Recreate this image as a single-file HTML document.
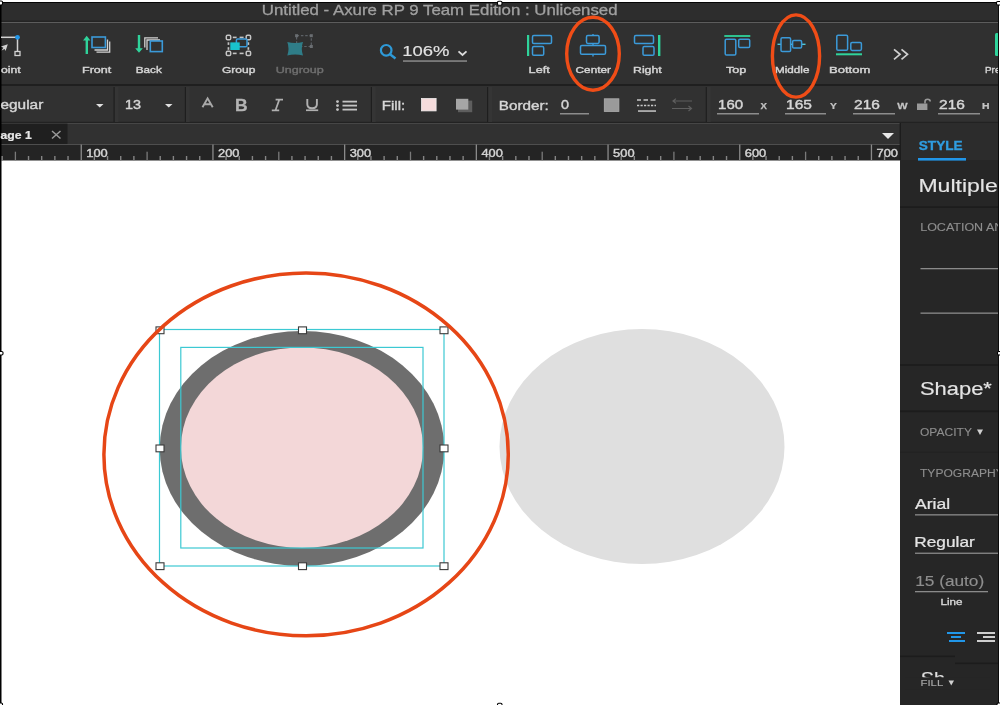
<!DOCTYPE html>
<html><head><meta charset="utf-8"><style>
html,body{margin:0;padding:0;width:1000px;height:705px;overflow:hidden;background:#fff}
svg{display:block;font-family:"Liberation Sans", sans-serif;will-change:transform}
</style></head><body>
<svg width="1000" height="705" viewBox="0 0 1000 705">
<rect x="0" y="0" width="1000" height="705" fill="#ffffff" />
<rect x="0" y="2" width="1000" height="1" fill="#050505" />
<rect x="0" y="3" width="999" height="18" fill="#2d2d2d" />
<rect x="0" y="20.7" width="999" height="1.9" fill="#242424" />
<rect x="0" y="22.6" width="999" height="62" fill="#303030" />
<rect x="0" y="84" width="999" height="2" fill="#1f1f1f" />
<rect x="0" y="86" width="999" height="37" fill="#313131" />
<rect x="0" y="121.8" width="999" height="2" fill="#222222" />
<rect x="0" y="123.8" width="900" height="21" fill="#313131" />
<rect x="0" y="123.6" width="67.5" height="20.3" fill="#1f1f1f" />
<rect x="0" y="144.8" width="900" height="15.7" fill="#242424" />
<rect x="900" y="123" width="99" height="582" fill="#262626" />
<rect x="900" y="123" width="99" height="37" fill="#2c2c2c" />
<rect x="899.6" y="123" width="1.4" height="37" fill="#1c1c1c" />
<rect x="114.5" y="87" width="4" height="35" fill="#353535" />
<rect x="113.5" y="87" width="1.2" height="35" fill="#1e1e1e" />
<rect x="185.8" y="87" width="4" height="35" fill="#353535" />
<rect x="184.8" y="87" width="1.2" height="35" fill="#1e1e1e" />
<rect x="371.8" y="87" width="4" height="35" fill="#353535" />
<rect x="370.8" y="87" width="1.2" height="35" fill="#1e1e1e" />
<rect x="488" y="87" width="4" height="35" fill="#353535" />
<rect x="487" y="87" width="1.2" height="35" fill="#1e1e1e" />
<rect x="706.7" y="87" width="4" height="35" fill="#353535" />
<rect x="705.7" y="87" width="1.2" height="35" fill="#1e1e1e" />
<rect x="0" y="2" width="1.5" height="703" fill="#000000" />
<rect x="998" y="2" width="1" height="703" fill="#111111" />
<text transform="translate(261.84,15.30) scale(1.1579,1)" font-size="14.54" fill="#a0a0a0" font-weight="400" font-style="normal" stroke="#a0a0a0" stroke-width="0.3">Untitled - Axure RP 9 Team Edition : Unlicensed</text>
<text transform="translate(1.00,72.80) scale(1.2378,1)" font-size="9.88" fill="#d6d6d6" font-weight="400" font-style="normal" stroke="#d6d6d6" stroke-width="0.39506172839506193">oint</text>
<text transform="translate(82.00,72.80) scale(1.2719,1)" font-size="9.88" fill="#d6d6d6" font-weight="400" font-style="normal" stroke="#d6d6d6" stroke-width="0.39506172839506193">Front</text>
<text transform="translate(135.80,72.80) scale(1.1869,1)" font-size="9.88" fill="#d6d6d6" font-weight="400" font-style="normal" stroke="#d6d6d6" stroke-width="0.39506172839506193">Back</text>
<text transform="translate(222.00,72.80) scale(1.2178,1)" font-size="9.88" fill="#d6d6d6" font-weight="400" font-style="normal" stroke="#d6d6d6" stroke-width="0.39506172839506193">Group</text>
<text transform="translate(528.60,72.80) scale(1.2810,1)" font-size="9.88" fill="#d6d6d6" font-weight="400" font-style="normal" stroke="#d6d6d6" stroke-width="0.39506172839506193">Left</text>
<text transform="translate(575.60,72.80) scale(1.1911,1)" font-size="9.88" fill="#d6d6d6" font-weight="400" font-style="normal" stroke="#d6d6d6" stroke-width="0.39506172839506193">Center</text>
<text transform="translate(633.00,72.80) scale(1.2459,1)" font-size="9.88" fill="#d6d6d6" font-weight="400" font-style="normal" stroke="#d6d6d6" stroke-width="0.39506172839506193">Right</text>
<text transform="translate(726.00,72.80) scale(1.2796,1)" font-size="9.88" fill="#d6d6d6" font-weight="400" font-style="normal" stroke="#d6d6d6" stroke-width="0.39506172839506193">Top</text>
<text transform="translate(775.00,72.80) scale(1.1840,1)" font-size="9.88" fill="#d6d6d6" font-weight="400" font-style="normal" stroke="#d6d6d6" stroke-width="0.39506172839506193">Middle</text>
<text transform="translate(829.00,72.80) scale(1.3217,1)" font-size="9.88" fill="#d6d6d6" font-weight="400" font-style="normal" stroke="#d6d6d6" stroke-width="0.39506172839506193">Bottom</text>
<text transform="translate(275.70,72.80) scale(1.2703,1)" font-size="9.88" fill="#6e6e6e" font-weight="400" font-style="normal" stroke="#6e6e6e" stroke-width="0.39506172839506193">Ungroup</text>
<text transform="translate(985.00,72.80) scale(1.0000,1)" font-size="9.88" fill="#d6d6d6" font-weight="400" font-style="normal" stroke="#d6d6d6" stroke-width="0.39506172839506193">Preview</text>
<text transform="translate(-10.60,109.40) scale(1.2194,1)" font-size="12.62" fill="#d6d6d6" font-weight="400" font-style="normal" stroke="#d6d6d6" stroke-width="0.4">Regular</text>
<text transform="translate(125.00,109.40) scale(1.1418,1)" font-size="12.62" fill="#d6d6d6" font-weight="400" font-style="normal" stroke="#d6d6d6" stroke-width="0.4">13</text>
<text transform="translate(381.86,110.20) scale(1.1380,1)" font-size="13.17" fill="#d6d6d6" font-weight="400" font-style="normal" stroke="#d6d6d6" stroke-width="0.4">Fill:</text>
<text transform="translate(498.84,110.20) scale(1.1570,1)" font-size="13.17" fill="#d6d6d6" font-weight="400" font-style="normal" stroke="#d6d6d6" stroke-width="0.4">Border:</text>
<text transform="translate(561.00,109.40) scale(1.1429,1)" font-size="12.62" fill="#d6d6d6" font-weight="400" font-style="normal" stroke="#d6d6d6" stroke-width="0.4">0</text>
<text transform="translate(718.00,109.20) scale(1.2075,1)" font-size="12.48" fill="#d6d6d6" font-weight="400" font-style="normal" stroke="#d6d6d6" stroke-width="0.4">160</text>
<text transform="translate(786.00,109.20) scale(1.2459,1)" font-size="12.48" fill="#d6d6d6" font-weight="400" font-style="normal" stroke="#d6d6d6" stroke-width="0.4">165</text>
<text transform="translate(854.00,109.20) scale(1.2459,1)" font-size="12.48" fill="#d6d6d6" font-weight="400" font-style="normal" stroke="#d6d6d6" stroke-width="0.4">216</text>
<text transform="translate(939.00,109.20) scale(1.2459,1)" font-size="12.48" fill="#d6d6d6" font-weight="400" font-style="normal" stroke="#d6d6d6" stroke-width="0.4">216</text>
<text transform="translate(760.50,108.60) scale(1.0000,1)" font-size="9.60" fill="#c4c4c4" font-weight="700" font-style="normal" stroke="#c4c4c4" stroke-width="0.25">X</text>
<text transform="translate(830.00,108.60) scale(1.0714,1)" font-size="9.60" fill="#c4c4c4" font-weight="700" font-style="normal" stroke="#c4c4c4" stroke-width="0.25">Y</text>
<text transform="translate(897.20,108.60) scale(1.1400,1)" font-size="9.60" fill="#c4c4c4" font-weight="700" font-style="normal" stroke="#c4c4c4" stroke-width="0.25">W</text>
<text transform="translate(982.00,108.60) scale(1.0857,1)" font-size="9.60" fill="#c4c4c4" font-weight="700" font-style="normal" stroke="#c4c4c4" stroke-width="0.25">H</text>
<rect x="560" y="113" width="29" height="1.5" fill="#8c8c8c" />
<rect x="717" y="113" width="42" height="1.5" fill="#8c8c8c" />
<rect x="785" y="113" width="41" height="1.5" fill="#8c8c8c" />
<rect x="853" y="113" width="42" height="1.5" fill="#8c8c8c" />
<rect x="938" y="113" width="42" height="1.5" fill="#8c8c8c" />
<text transform="translate(-7.64,138.50) scale(1.0981,1)" font-size="11.11" fill="#e6e6e6" font-weight="700" font-style="normal" stroke="#e6e6e6" stroke-width="0.25">Page 1</text>
<ellipse cx="642" cy="446.5" rx="142.5" ry="117.5" fill="#dfdfdf"/>
<ellipse cx="302" cy="448.5" rx="142.3" ry="117.5" fill="#6e6e6e"/>
<ellipse cx="302" cy="447.7" rx="121.1" ry="100.3" fill="#f3d7d8"/>
<rect x="159.5" y="329.5" width="284.5" height="236.5" fill="none" stroke="#3cc9d3" stroke-width="1.2"/>
<rect x="180.8" y="347.4" width="242.2" height="200.6" fill="none" stroke="#3cc9d3" stroke-width="1.2"/>
<rect x="156" y="326.90000000000003" width="8" height="6.8" fill="#ffffff" stroke="#3a3a3a" stroke-width="1.1"/>
<rect x="298.5" y="326.90000000000003" width="8" height="6.8" fill="#ffffff" stroke="#3a3a3a" stroke-width="1.1"/>
<rect x="440" y="326.90000000000003" width="8" height="6.8" fill="#ffffff" stroke="#3a3a3a" stroke-width="1.1"/>
<rect x="156" y="445.0" width="8" height="6.8" fill="#ffffff" stroke="#3a3a3a" stroke-width="1.1"/>
<rect x="440" y="445.0" width="8" height="6.8" fill="#ffffff" stroke="#3a3a3a" stroke-width="1.1"/>
<rect x="156" y="562.8000000000001" width="8" height="6.8" fill="#ffffff" stroke="#3a3a3a" stroke-width="1.1"/>
<rect x="298.5" y="562.8000000000001" width="8" height="6.8" fill="#ffffff" stroke="#3a3a3a" stroke-width="1.1"/>
<rect x="440" y="562.8000000000001" width="8" height="6.8" fill="#ffffff" stroke="#3a3a3a" stroke-width="1.1"/>
<ellipse cx="306.1" cy="454.4" rx="202.2" ry="181.4" fill="none" stroke="#e64616" stroke-width="3.5"/>
<ellipse cx="593" cy="53.7" rx="26.3" ry="36.5" fill="none" stroke="#f04d17" stroke-width="3.4"/>
<ellipse cx="796" cy="56" rx="23.6" ry="41.1" fill="none" stroke="#f04d17" stroke-width="3.4"/>
<line x1="1" y1="37.3" x2="17" y2="37.3" stroke="#d2d2d2" stroke-width="1.5" />
<line x1="17.5" y1="38" x2="17.5" y2="51.5" stroke="#d2d2d2" stroke-width="1.5" />
<rect x="15" y="51.5" width="5" height="4" fill="none" stroke="#d2d2d2" stroke-width="1.3"/>
<circle cx="17.5" cy="37.3" r="2.4" fill="#2196e8"/>
<path d="M7.8,44.2 L1,46.6 L3.4,47.8 L1.6,50.6 L4.6,49 L5.6,51 Z" fill="#d2d2d2"/>
<path d="M86.7,35.8 L83,40.6 L85.6,40.6 L85.6,54 L88,54 L88,40.6 L90.4,40.6 Z" fill="#2fd39b"/>
<rect x="92" y="37" width="13.4" height="10.5" fill="none" stroke="#3b9ad9" stroke-width="1.6"/>
<path d="M94.5,50 H107.5 V39.5" fill="none" stroke="#d2d2d2" stroke-width="1.3"/>
<path d="M96.5,52.2 H109.7 V41.5" fill="none" stroke="#d2d2d2" stroke-width="1.3"/>
<path d="M139,52.8 L135.2,48.2 L137.8,48.2 L137.8,35 L140.2,35 L140.2,48.2 L142.8,48.2 Z" fill="#2fd39b"/>
<path d="M144.8,47.5 V37.8 H158" fill="none" stroke="#d2d2d2" stroke-width="1.3"/>
<path d="M147,50 V40 H160" fill="none" stroke="#d2d2d2" stroke-width="1.3"/>
<rect x="150.3" y="41" width="12" height="10.6" fill="none" stroke="#3b9ad9" stroke-width="1.6"/>
<rect x="226.3" y="35.3" width="4.4" height="4.4" fill="none" stroke="#c4c4c4" stroke-width="1.5" rx="1.3"/>
<rect x="246.20000000000002" y="35.3" width="4.4" height="4.4" fill="none" stroke="#c4c4c4" stroke-width="1.5" rx="1.3"/>
<rect x="226.3" y="51.199999999999996" width="4.4" height="4.4" fill="none" stroke="#c4c4c4" stroke-width="1.5" rx="1.3"/>
<rect x="246.20000000000002" y="51.199999999999996" width="4.4" height="4.4" fill="none" stroke="#c4c4c4" stroke-width="1.5" rx="1.3"/>
<rect x="232.8" y="36.6" width="3.799999999999983" height="1.6" fill="#c4c4c4" />
<rect x="232.8" y="52.6" width="3.799999999999983" height="1.6" fill="#c4c4c4" />
<rect x="239.6" y="36.6" width="4.0" height="1.6" fill="#c4c4c4" />
<rect x="239.6" y="52.6" width="4.0" height="1.6" fill="#c4c4c4" />
<rect x="227.6" y="42.3" width="1.7" height="2.6000000000000014" fill="#c4c4c4" />
<rect x="247.5" y="42.3" width="1.7" height="2.6000000000000014" fill="#c4c4c4" />
<rect x="227.6" y="47.2" width="1.7" height="2.5999999999999943" fill="#c4c4c4" />
<rect x="247.5" y="47.2" width="1.7" height="2.5999999999999943" fill="#c4c4c4" />
<rect x="236.4" y="39" width="10.6" height="7.8" fill="none" stroke="#3b9ad9" stroke-width="1.5" rx="1.3"/>
<rect x="230.3" y="42.4" width="9.4" height="7.6" fill="#19c3cc" />
<rect x="296.6" y="35.7" width="14.7" height="10.8" fill="none" stroke="#5c6166" stroke-width="1.2" stroke-dasharray="2.5,1.8"/>
<rect x="295.1" y="34.2" width="3" height="3" fill="#6a6e72" />
<rect x="309.8" y="34.2" width="3" height="3" fill="#6a6e72" />
<rect x="309.8" y="45.0" width="3" height="3" fill="#6a6e72" />
<path d="M287.3,42 Q295,44.2 303,42 Q300.6,48.7 303,55.5 Q295,53.3 287.3,55.5 Q289.7,48.7 287.3,42 Z" fill="#2f7d88"/>
<circle cx="386.2" cy="50.3" r="5.3" fill="none" stroke="#2e9ad8" stroke-width="2.2"/>
<line x1="390" y1="54.2" x2="395.5" y2="58.5" stroke="#2e9ad8" stroke-width="2.4" />
<text transform="translate(402.28,55.90) scale(1.2245,1)" font-size="15.09" fill="#e2e2e2" font-weight="400" font-style="normal" stroke="#e2e2e2" stroke-width="0.15">106%</text>
<path d="M458.5,51.3 L462.5,55 L466.5,51.3" fill="none" stroke="#dcdcdc" stroke-width="1.8"/>
<rect x="403" y="60.3" width="64" height="1.5" fill="#8a8a8a" />
<rect x="527" y="35" width="2.2" height="21" fill="#2fd39b" />
<rect x="532.5" y="35.6" width="19" height="8" fill="none" stroke="#3b9ad9" stroke-width="1.5" rx="1.3"/>
<rect x="532.5" y="46.6" width="11.2" height="8.7" fill="none" stroke="#3b9ad9" stroke-width="1.5" rx="1.3"/>
<line x1="593" y1="34" x2="593" y2="56.5" stroke="#3b9ad9" stroke-width="1.4" />
<rect x="586.5" y="35.6" width="12.6" height="7.8" fill="#303030" stroke="#3b9ad9" stroke-width="1.5" rx="1.3"/>
<rect x="580.5" y="45.4" width="25" height="8.8" fill="#303030" stroke="#3b9ad9" stroke-width="1.5" rx="1.3"/>
<rect x="658" y="35" width="2.4" height="21" fill="#2fd39b" />
<rect x="634.5" y="35.6" width="19" height="8" fill="none" stroke="#3b9ad9" stroke-width="1.5" rx="1.3"/>
<rect x="643" y="46.6" width="11" height="8.7" fill="none" stroke="#3b9ad9" stroke-width="1.5" rx="1.3"/>
<rect x="724.3" y="35.1" width="26" height="1.8" fill="#2fd39b" />
<rect x="725.2" y="39.2" width="10.6" height="15.8" fill="none" stroke="#3b9ad9" stroke-width="1.5" rx="1.3"/>
<rect x="738.7" y="39.2" width="11" height="8.4" fill="none" stroke="#3b9ad9" stroke-width="1.5" rx="1.3"/>
<line x1="777.5" y1="44.3" x2="805.5" y2="44.3" stroke="#4fc9d8" stroke-width="1.4" />
<rect x="781" y="37.8" width="9.6" height="13.8" fill="#303030" stroke="#3b9ad9" stroke-width="1.5" rx="1.3"/>
<rect x="792.6" y="40.4" width="9" height="7.7" fill="#303030" stroke="#3b9ad9" stroke-width="1.5" rx="1.3"/>
<rect x="836.8" y="35.2" width="10.8" height="15" fill="none" stroke="#3b9ad9" stroke-width="1.5" rx="1.3"/>
<rect x="850.8" y="42.4" width="10.6" height="8" fill="none" stroke="#3b9ad9" stroke-width="1.5" rx="1.3"/>
<rect x="836" y="53.3" width="26" height="2" fill="#2fd39b" />
<path d="M894,49.3 L900,54.3 L894,59.3 M901.5,49.3 L907.5,54.3 L901.5,59.3" fill="none" stroke="#d0d0d0" stroke-width="1.7"/>
<rect x="995" y="33" width="4" height="23" fill="#2fd39b" rx="1.5"/>
<path d="M96,104 L103.5,104 L99.75,107.5 Z" fill="#e0e0e0"/>
<path d="M165,104 L172.5,104 L168.75,107.5 Z" fill="#e0e0e0"/>
<path d="M202.5,107.3 L207.6,98.4 L212.7,107.3 M204.4,104.2 L210.8,104.2" fill="none" stroke="#a8a8a8" stroke-width="1.9"/>
<text transform="translate(234.94,111.30) scale(1.0636,1)" font-size="16.46" fill="#b4b4b4" font-weight="700" font-style="normal" stroke="#b4b4b4" stroke-width="0.25">B</text>
<path d="M275.6,99.6 H283 M271.8,110.3 H279.2 M279.3,99.6 L275.5,110.3" fill="none" stroke="#b0b0b0" stroke-width="1.7"/>
<path d="M307.3,99 V104.2 Q307.3,108.2 312.1,108.2 Q316.9,108.2 316.9,104.2 V99" fill="none" stroke="#b0b0b0" stroke-width="1.9"/>
<rect x="306" y="109.4" width="12.2" height="1.7" fill="#b0b0b0" />
<circle cx="337.5" cy="101.6" r="1.4" fill="#c4c4c4"/>
<rect x="342.5" y="100.69999999999999" width="14.5" height="1.8" fill="#c4c4c4" />
<circle cx="337.5" cy="105.6" r="1.4" fill="#c4c4c4"/>
<rect x="342.5" y="104.69999999999999" width="14.5" height="1.8" fill="#c4c4c4" />
<circle cx="337.5" cy="109.6" r="1.4" fill="#c4c4c4"/>
<rect x="342.5" y="108.69999999999999" width="14.5" height="1.8" fill="#c4c4c4" />
<rect x="421.5" y="98.5" width="14.6" height="12.4" fill="#f6dcdc" stroke="#f2eeee" stroke-width="0.8"/>
<rect x="458" y="100.6" width="14.2" height="11.6" fill="#5e5e5e" />
<rect x="456" y="98.8" width="12.3" height="10.8" fill="#a6a6a6" />
<rect x="604.3" y="98.8" width="14.6" height="12.6" fill="#9a9a9a" stroke="#b0b0b0" stroke-width="0.8"/>
<path d="M637,100 H641 M643.5,100 H648 M650.5,100 H655.5" fill="none" stroke="#c8c8c8" stroke-width="1.7"/>
<path d="M637,105.5 H656" fill="none" stroke="#c8c8c8" stroke-width="1.3" stroke-dasharray="2.2,1.3"/>
<rect x="638" y="110.3" width="18" height="1.5" fill="#c8c8c8" />
<path d="M692,101 H673 M676,98.6 L673,101 L676,103.4 M672,108.5 H691.5 M688.5,106 L691.5,108.5 L688.5,111" fill="none" stroke="#5e5e5e" stroke-width="1.2"/>
<rect x="917" y="103.5" width="10.4" height="6.5" fill="#9a9a9a" />
<path d="M925,103.5 V101.6 Q925,99.2 927.6,99.2 Q930.2,99.2 930.2,101.6" fill="none" stroke="#9a9a9a" stroke-width="1.6"/>
<rect x="1.4800000000000069" y="156" width="1.4" height="4.5" fill="#858585" />
<rect x="14.750000000000023" y="151.7" width="1.3" height="8.6" fill="#7a7a7a" />
<rect x="27.82000000000001" y="156" width="1.4" height="4.5" fill="#858585" />
<rect x="40.99000000000002" y="156" width="1.4" height="4.5" fill="#858585" />
<rect x="54.16000000000001" y="156" width="1.4" height="4.5" fill="#858585" />
<rect x="67.33" y="156" width="1.4" height="4.5" fill="#858585" />
<rect x="80.60000000000002" y="144.5" width="1.3" height="16" fill="#8a8a8a" />
<rect x="93.67" y="156" width="1.4" height="4.5" fill="#858585" />
<rect x="106.84" y="156" width="1.4" height="4.5" fill="#858585" />
<rect x="120.01" y="156" width="1.4" height="4.5" fill="#858585" />
<rect x="133.18" y="156" width="1.4" height="4.5" fill="#858585" />
<rect x="146.45000000000002" y="151.7" width="1.3" height="8.6" fill="#7a7a7a" />
<rect x="159.52" y="156" width="1.4" height="4.5" fill="#858585" />
<rect x="172.69000000000003" y="156" width="1.4" height="4.5" fill="#858585" />
<rect x="185.86" y="156" width="1.4" height="4.5" fill="#858585" />
<rect x="199.03000000000003" y="156" width="1.4" height="4.5" fill="#858585" />
<rect x="212.3" y="144.5" width="1.3" height="16" fill="#8a8a8a" />
<rect x="225.37" y="156" width="1.4" height="4.5" fill="#858585" />
<rect x="238.54000000000002" y="156" width="1.4" height="4.5" fill="#858585" />
<rect x="251.71" y="156" width="1.4" height="4.5" fill="#858585" />
<rect x="264.88" y="156" width="1.4" height="4.5" fill="#858585" />
<rect x="278.15" y="151.7" width="1.3" height="8.6" fill="#7a7a7a" />
<rect x="291.22" y="156" width="1.4" height="4.5" fill="#858585" />
<rect x="304.39000000000004" y="156" width="1.4" height="4.5" fill="#858585" />
<rect x="317.56" y="156" width="1.4" height="4.5" fill="#858585" />
<rect x="330.73" y="156" width="1.4" height="4.5" fill="#858585" />
<rect x="344.0" y="144.5" width="1.3" height="16" fill="#8a8a8a" />
<rect x="357.07" y="156" width="1.4" height="4.5" fill="#858585" />
<rect x="370.24" y="156" width="1.4" height="4.5" fill="#858585" />
<rect x="383.41" y="156" width="1.4" height="4.5" fill="#858585" />
<rect x="396.58" y="156" width="1.4" height="4.5" fill="#858585" />
<rect x="409.84999999999997" y="151.7" width="1.3" height="8.6" fill="#7a7a7a" />
<rect x="422.92" y="156" width="1.4" height="4.5" fill="#858585" />
<rect x="436.09" y="156" width="1.4" height="4.5" fill="#858585" />
<rect x="449.26000000000005" y="156" width="1.4" height="4.5" fill="#858585" />
<rect x="462.43" y="156" width="1.4" height="4.5" fill="#858585" />
<rect x="475.69999999999993" y="144.5" width="1.3" height="16" fill="#8a8a8a" />
<rect x="488.77000000000004" y="156" width="1.4" height="4.5" fill="#858585" />
<rect x="501.94" y="156" width="1.4" height="4.5" fill="#858585" />
<rect x="515.1099999999999" y="156" width="1.4" height="4.5" fill="#858585" />
<rect x="528.28" y="156" width="1.4" height="4.5" fill="#858585" />
<rect x="541.55" y="151.7" width="1.3" height="8.6" fill="#7a7a7a" />
<rect x="554.6199999999999" y="156" width="1.4" height="4.5" fill="#858585" />
<rect x="567.79" y="156" width="1.4" height="4.5" fill="#858585" />
<rect x="580.9599999999999" y="156" width="1.4" height="4.5" fill="#858585" />
<rect x="594.13" y="156" width="1.4" height="4.5" fill="#858585" />
<rect x="607.4" y="144.5" width="1.3" height="16" fill="#8a8a8a" />
<rect x="620.4699999999999" y="156" width="1.4" height="4.5" fill="#858585" />
<rect x="633.64" y="156" width="1.4" height="4.5" fill="#858585" />
<rect x="646.81" y="156" width="1.4" height="4.5" fill="#858585" />
<rect x="659.9799999999999" y="156" width="1.4" height="4.5" fill="#858585" />
<rect x="673.25" y="151.7" width="1.3" height="8.6" fill="#7a7a7a" />
<rect x="686.3199999999999" y="156" width="1.4" height="4.5" fill="#858585" />
<rect x="699.4899999999999" y="156" width="1.4" height="4.5" fill="#858585" />
<rect x="712.66" y="156" width="1.4" height="4.5" fill="#858585" />
<rect x="725.8299999999999" y="156" width="1.4" height="4.5" fill="#858585" />
<rect x="739.0999999999999" y="144.5" width="1.3" height="16" fill="#8a8a8a" />
<rect x="752.17" y="156" width="1.4" height="4.5" fill="#858585" />
<rect x="765.3399999999999" y="156" width="1.4" height="4.5" fill="#858585" />
<rect x="778.5099999999999" y="156" width="1.4" height="4.5" fill="#858585" />
<rect x="791.68" y="156" width="1.4" height="4.5" fill="#858585" />
<rect x="804.9499999999999" y="151.7" width="1.3" height="8.6" fill="#7a7a7a" />
<rect x="818.0199999999999" y="156" width="1.4" height="4.5" fill="#858585" />
<rect x="831.1899999999999" y="156" width="1.4" height="4.5" fill="#858585" />
<rect x="844.3599999999999" y="156" width="1.4" height="4.5" fill="#858585" />
<rect x="857.5299999999999" y="156" width="1.4" height="4.5" fill="#858585" />
<rect x="870.8" y="144.5" width="1.3" height="16" fill="#8a8a8a" />
<rect x="883.8699999999999" y="156" width="1.4" height="4.5" fill="#858585" />
<text transform="translate(86.30,156.70) scale(1.2182,1)" font-size="10.56" fill="#d4d4d4" font-weight="400" font-style="normal" stroke="#d4d4d4" stroke-width="0.4">100</text>
<text transform="translate(218.00,156.70) scale(1.2182,1)" font-size="10.56" fill="#d4d4d4" font-weight="400" font-style="normal" stroke="#d4d4d4" stroke-width="0.4">200</text>
<text transform="translate(349.70,156.70) scale(1.2182,1)" font-size="10.56" fill="#d4d4d4" font-weight="400" font-style="normal" stroke="#d4d4d4" stroke-width="0.4">300</text>
<text transform="translate(481.40,156.70) scale(1.2182,1)" font-size="10.56" fill="#d4d4d4" font-weight="400" font-style="normal" stroke="#d4d4d4" stroke-width="0.4">400</text>
<text transform="translate(613.10,156.70) scale(1.2182,1)" font-size="10.56" fill="#d4d4d4" font-weight="400" font-style="normal" stroke="#d4d4d4" stroke-width="0.4">500</text>
<text transform="translate(744.80,156.70) scale(1.2182,1)" font-size="10.56" fill="#d4d4d4" font-weight="400" font-style="normal" stroke="#d4d4d4" stroke-width="0.4">600</text>
<text transform="translate(876.50,156.70) scale(1.2182,1)" font-size="10.56" fill="#d4d4d4" font-weight="400" font-style="normal" stroke="#d4d4d4" stroke-width="0.4">700</text>
<path d="M52,131 L60.5,138.5 M60.5,131 L52,138.5" fill="none" stroke="#9a9a9a" stroke-width="1.5" rx="1.3"/>
<path d="M882,133 L894,133 L888,139 Z" fill="#e8e8e8"/>
<rect x="900" y="206.3" width="99" height="1.6" fill="#1c1c1c" />
<rect x="900" y="364.2" width="99" height="1.6" fill="#1c1c1c" />
<rect x="900" y="410.4" width="99" height="1.8" fill="#1c1c1c" />
<rect x="900" y="451.5" width="99" height="1.2" fill="#222222" />
<text transform="translate(918.80,149.80) scale(1.0548,1)" font-size="12.89" fill="#2f9de0" font-weight="700" font-style="normal" stroke="#2f9de0" stroke-width="0.35">STYLE</text>
<rect x="918" y="158" width="48" height="2.6" fill="#2196e8" />
<text transform="translate(918.40,192.00) scale(1.2010,1)" font-size="19.20" fill="#e4e4e4" font-weight="400" font-style="normal" stroke="#e4e4e4" stroke-width="0.15">Multiple</text>
<text transform="translate(920.20,231.00) scale(1.2164,1)" font-size="10.29" fill="#8e8e8e" font-weight="400" font-style="normal" stroke="#8e8e8e" stroke-width="0.1">LOCATION AND</text>
<rect x="920.5" y="268" width="78" height="1.3" fill="#8a8a8a" />
<rect x="920.5" y="312.5" width="78" height="1.3" fill="#8a8a8a" />
<text transform="translate(920.00,395.00) scale(1.2297,1)" font-size="17.83" fill="#e4e4e4" font-weight="400" font-style="normal" stroke="#e4e4e4" stroke-width="0.15">Shape*</text>
<text transform="translate(920.00,436.20) scale(1.0838,1)" font-size="11.11" fill="#8e8e8e" font-weight="400" font-style="normal" stroke="#8e8e8e" stroke-width="0.1">OPACITY</text>
<path d="M977,429.5 L983,429.5 L980,435 Z" fill="#d0d0d0"/>
<text transform="translate(920.00,477.20) scale(1.0721,1)" font-size="11.25" fill="#8e8e8e" font-weight="400" font-style="normal" stroke="#8e8e8e" stroke-width="0.1">TYPOGRAPHY</text>
<text transform="translate(915.00,509.00) scale(1.2788,1)" font-size="13.72" fill="#e4e4e4" font-weight="400" font-style="normal" stroke="#e4e4e4" stroke-width="0.25">Arial</text>
<rect x="915" y="514.2" width="84" height="1.3" fill="#8a8a8a" />
<text transform="translate(914.30,547.30) scale(1.1995,1)" font-size="14.40" fill="#e4e4e4" font-weight="400" font-style="normal" stroke="#e4e4e4" stroke-width="0.25">Regular</text>
<rect x="915" y="552.6" width="84" height="1.3" fill="#8a8a8a" />
<text transform="translate(915.13,585.50) scale(1.1665,1)" font-size="14.81" fill="#8e8e8e" font-weight="400" font-style="normal" stroke="#8e8e8e" stroke-width="0.15">15 (auto)</text>
<rect x="915" y="591" width="73" height="1.3" fill="#8a8a8a" />
<text transform="translate(940.60,604.60) scale(1.1745,1)" font-size="9.88" fill="#d8d8d8" font-weight="400" font-style="normal" stroke="#d8d8d8" stroke-width="0.35">Line</text>
<rect x="947" y="632" width="18" height="2" fill="#2196e8" />
<rect x="951" y="636" width="10" height="2" fill="#2196e8" />
<rect x="949" y="640" width="16" height="2" fill="#2196e8" />
<rect x="977" y="632" width="18" height="2" fill="#cfcfcf" />
<rect x="983" y="636" width="12" height="2" fill="#cfcfcf" />
<rect x="977" y="640" width="18" height="2" fill="#cfcfcf" />
<rect x="900" y="655.5" width="55" height="1.6" fill="#1c1c1c" />
<rect x="955" y="662.5" width="44" height="1.6" fill="#1c1c1c" />
<text transform="translate(920.70,685.20) scale(1.1153,1)" font-size="17.83" fill="#e0e0e0" font-weight="400" font-style="normal" stroke="#e0e0e0" stroke-width="0.15">Sh</text>
<rect x="905" y="677.3" width="85" height="12" fill="#262626" />
<text transform="translate(920.50,686.30) scale(1.3172,1)" font-size="8.64" fill="#a8a8a8" font-weight="400" font-style="normal" stroke="#a8a8a8" stroke-width="0.1">FILL</text>
<path d="M948.5,680.6 L954,680.6 L951.25,685.5 Z" fill="#d0d0d0"/>
<rect x="998" y="2" width="1" height="703" fill="#0a0a0a" />
<rect x="999" y="0" width="1" height="705" fill="#ffffff" />
<rect x="497.5" y="1.2" width="4.5" height="4" fill="#ffffff" rx="1.2" stroke="#000" stroke-width="1.1"/>
<rect x="-2" y="351.5" width="5" height="3.5" fill="#ffffff" rx="1.2" stroke="#000" stroke-width="1.1"/>
<rect x="997.5" y="351.5" width="5" height="3.5" fill="#ffffff" rx="1.2" stroke="#000" stroke-width="1.1"/>
<rect x="497.5" y="703.2" width="4.5" height="4" fill="#ffffff" rx="1.2" stroke="#000" stroke-width="1.1"/>
<rect x="996.5" y="1.5" width="5" height="3.5" fill="#ffffff" rx="1.2" stroke="#000" stroke-width="1.1"/>
<rect x="997" y="703" width="5" height="4" fill="#ffffff" rx="1.2" stroke="#000" stroke-width="1.1"/>
<rect x="-2" y="1" width="4.5" height="4" fill="#ffffff" rx="1.2" stroke="#000" stroke-width="1.1"/>
<rect x="-2" y="703" width="4.5" height="4" fill="#ffffff" rx="1.2" stroke="#000" stroke-width="1.1"/>
</svg></body></html>
